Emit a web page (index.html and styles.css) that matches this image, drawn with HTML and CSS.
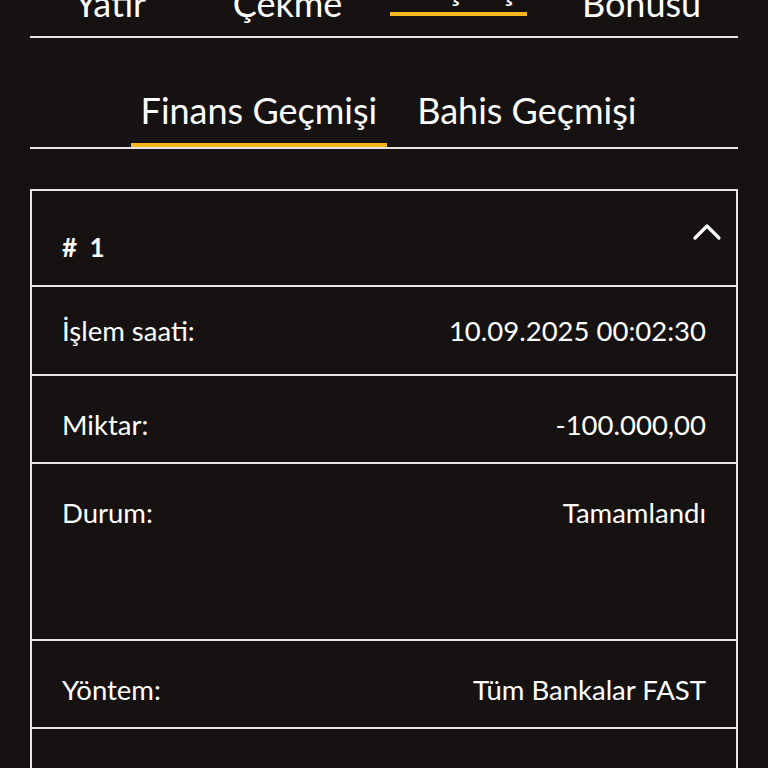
FILE: index.html
```html
<!DOCTYPE html>
<html lang="tr">
<head>
    <meta charset="UTF-8">
    <meta name="viewport" content="width=device-width, initial-scale=1.0">
    <title>Geçmiş</title>
    <link rel="stylesheet" href="styles.css">
</head>
<body>

<nav class="mainNav">
    <div class="mainTabs">
        <a href="#" class="mainTab">Para<br>Yatır</a>
        <a href="#" class="mainTab">Para<br>Çekme</a>
        <a href="#" class="mainTab active">Geçmiş</a>
        <a href="#" class="mainTab">Kayıp<br>Bonusu</a>
    </div>
</nav>

<div class="subTabs">
    <a href="#" class="subTab active">Finans Geçmişi</a>
    <a href="#" class="subTab">Bahis Geçmişi</a>
</div>

<div class="card">
    <div class="cardHead">
        <span class="cardTitle"># 1</span>
        <svg class="toggle" width="30" height="18" viewBox="0 0 30 18">
            <polyline points="3,15 15,3 27,15" fill="none" stroke="#fff" stroke-width="3.2" stroke-linecap="round" stroke-linejoin="round"/>
        </svg>
    </div>
    <div class="row first">
        <span>İşlem saati:</span>
        <span>10.09.2025 00:02:30</span>
    </div>
    <div class="row">
        <span>Miktar:</span>
        <span>-100.000,00</span>
    </div>
    <div class="row tall">
        <span>Durum:</span>
        <span>Tamamlandı</span>
    </div>
    <div class="row">
        <span>Yöntem:</span>
        <span>Tüm Bankalar FAST</span>
    </div>
    <div class="row">
        <span>Açıklama:</span>
        <span>-</span>
    </div>
</div>

</body>
</html>
```

FILE: styles.css
```css
body {
    background-color: #151211;
    margin: 0;
    padding: 0 30px 40px;
    color: #fff;
    font-family: Lato, "Noto Sans", sans-serif;
}

a {
    text-decoration: none;
    color: #fff;
}

.mainNav {
    margin-top: -61px;
    padding-bottom: 11px;
    border-bottom: 2px solid #e9e7e4;
}

.mainTabs {
    display: grid;
    grid-template-columns: repeat(4, 1fr);
    align-items: end;
    margin: 0 8px 0 -8px;
}

.mainTab {
    justify-self: center;
    text-align: center;
    font-size: 36px;
    line-height: 1.2;
    padding: 0 10px;
}

.mainTab.active {
    min-width: 116px;
    padding-bottom: 4px;
    border-bottom: 4px solid #f5b51c;
    margin: 0 12px 9px 0;
}

.subTabs {
    display: flex;
    justify-content: center;
    gap: 20px;
    margin-top: 51px;
    padding-left: 9px;
    border-bottom: 2px solid #e9e7e4;
}

.subTab {
    font-size: 36px;
    line-height: 1.2;
    padding: 0 10px 10px;
    border-bottom: 4px solid transparent;
}

.subTab.active {
    border-bottom-color: #f5b51c;
}

.card {
    margin-top: 40px;
    border: 2px solid #e9e7e4;
}

.cardHead {
    display: flex;
    justify-content: space-between;
    align-items: flex-start;
    padding: 32px 14px 22px 30px;
    border-bottom: 2px solid #e9e7e4;
}

.cardTitle {
    margin-top: 9px;
    font-size: 26px;
    font-weight: bold;
    line-height: 1.2;
    word-spacing: 6px;
}

.row {
    display: flex;
    justify-content: space-between;
    padding: 32px 30px 21px;
    font-size: 27.5px;
    line-height: 1.2;
    border-bottom: 2px solid #e9e7e4;
}

.row.first {
    padding-top: 27px;
    padding-bottom: 27px;
}

.row.tall {
    padding-bottom: 110px;
}
```
